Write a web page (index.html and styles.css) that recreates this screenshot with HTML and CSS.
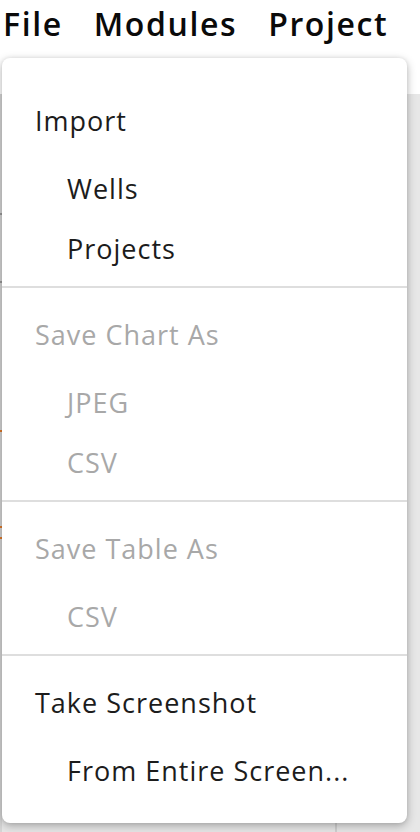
FILE: index.html
```html
<!DOCTYPE html>
<html>
<head>
<meta charset="utf-8">
<link rel="stylesheet" href="styles.css">
</head>
<body>
<div class="app">
  <header class="topbar">
    <nav class="menubar">
      <span class="menubar-item">File</span>
      <span class="menubar-item">Modules</span>
      <span class="menubar-item">Project</span>
    </nav>
  </header>
  <main class="content">
    <div class="edge">
      <span class="tick tick-a"></span>
      <span class="tick tick-b"></span>
      <span class="tick tick-c orange"></span>
      <span class="tick tick-d orange"></span>
      <span class="tick tick-e orange"></span>
    </div>
    <div class="divider-v"></div>
  </main>

  <div class="menu">
    <section class="menu-section first">
      <div class="menu-head">Import</div>
      <div class="menu-item">Wells</div>
      <div class="menu-item">Projects</div>
    </section>
    <section class="menu-section disabled">
      <div class="menu-head">Save Chart As</div>
      <div class="menu-item">JPEG</div>
      <div class="menu-item">CSV</div>
    </section>
    <section class="menu-section disabled">
      <div class="menu-head">Save Table As</div>
      <div class="menu-item">CSV</div>
    </section>
    <section class="menu-section last">
      <div class="menu-head">Take Screenshot</div>
      <div class="menu-item">From Entire Screen...</div>
    </section>
  </div>
</div>
</body>
</html>
```
FILE: styles.css
```css
html, body {
  margin: 0;
  padding: 0;
}
body {
  width: 420px;
  height: 832px;
  overflow: hidden;
  font-family: "Open Sans", "Noto Sans", sans-serif;
  background: #e6e6e6;
}
.app {
  position: relative;
  width: 420px;
  height: 832px;
  display: flex;
  flex-direction: column;
}
.topbar {
  height: 94px;
  background: #ffffff;
  flex: none;
}
.menubar {
  display: flex;
  gap: 31px;
  padding-left: 3px;
  height: 50px;
  align-items: center;
}
.menubar-item {
  font-size: 32px;
  font-weight: 600;
  letter-spacing: 1.6px;
  color: #0a0a0a;
  line-height: 1;
  margin-top: -3px;
}
.content {
  position: relative;
  flex: 1;
  background: #e7e7e7;
}
.edge {
  position: absolute;
  left: 0;
  top: 0;
  bottom: 0;
  width: 2px;
  background: #d6d6d6;
}
.tick {
  position: absolute;
  left: 0;
  width: 2px;
  height: 2px;
  background: #9a9a9a;
}
.tick.orange { background: #e07a2a; }
.tick-a { top: 119px; }
.tick-b { top: 187px; }
.tick-c { top: 336px; }
.tick-d { top: 432px; }
.tick-e { top: 443px; }
.divider-v {
  position: absolute;
  left: 335px;
  top: 700px;
  bottom: 0;
  width: 2px;
  background: #d0d0d0;
}
.menu {
  position: absolute;
  left: 2px;
  top: 58px;
  width: 405px;
  box-sizing: border-box;
  padding: 15px 0;
  background: #ffffff;
  border-radius: 8px;
  box-shadow: 0 3px 10px rgba(0, 0, 0, 0.28), 0 0 4px rgba(0, 0, 0, 0.08);
}
.menu-section {
  padding: 16px 0 8px;
  border-top: 2px solid #dedede;
}
.menu-section.first {
  padding-top: 17px;
  border-top: none;
}
.menu-head,
.menu-item {
  height: 60px;
  display: flex;
  align-items: center;
  font-size: 27px;
  letter-spacing: 1px;
  color: #1c1c1c;
  white-space: nowrap;
}
.menu-head {
  padding-left: 33px;
  margin-bottom: 8px;
}
.menu-item {
  padding-left: 65px;
}
.disabled .menu-head,
.disabled .menu-item {
  color: #a8a8a8;
}
```
